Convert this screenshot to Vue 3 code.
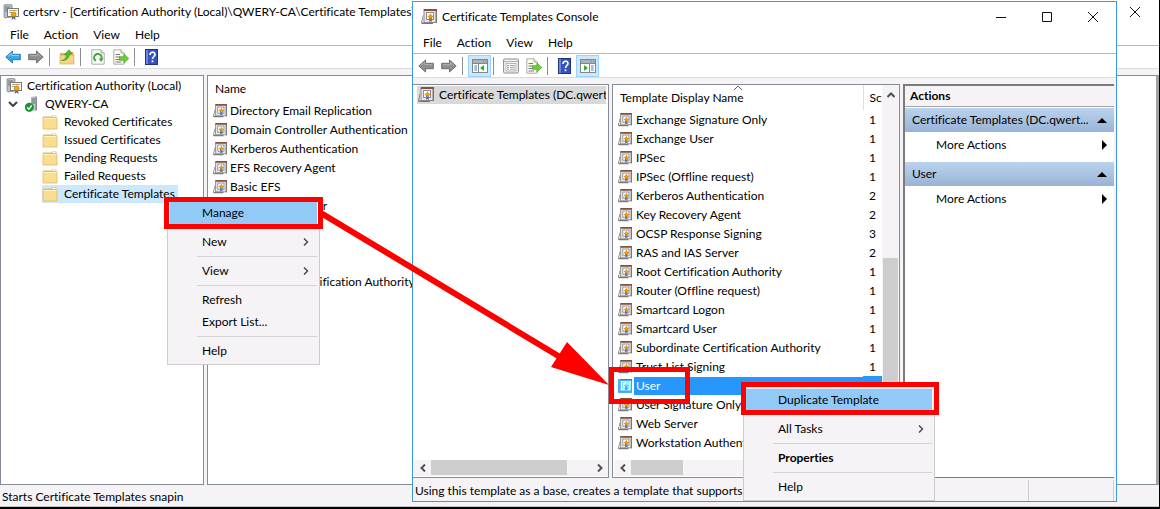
<template>
    <div class="desktop">
        <svg class="sprite" aria-hidden="true">
            <symbol id="template" viewBox="0 0 16 16">
                <path d="M2.5 7 L1 13.5 H12 V15 H1 L0 14 L2 6z" fill="#77777c" />
                <path d="M2.8 8 L2 13 H12z" fill="#fff" />
                <rect x="3" y="0.5" width="12.5" height="13" fill="#ece7e4" stroke="#8d8583" />
                <rect x="3" y="0" width="13" height="2" fill="#87503f" />
                <rect x="14.5" y="2" width="1.5" height="12" fill="#77777c" />
                <rect x="5.5" y="3.5" width="7" height="7" fill="#fff" stroke="#8b8b99" />
                <path d="M8.2 8 H10.8 V13 L9.5 12 L8.2 13z" fill="#4d71b5" />
                <path d="M9.5 4.8 L10.4 6.6 L12.2 7.5 L10.4 8.4 L9.5 10.2 L8.6 8.4 L6.8 7.5 L8.6 6.6z" fill="#f0a500" stroke="#c77d00" stroke-width="0.6" />
            </symbol>
            <symbol id="authority" viewBox="0 0 16 16">
                <path d="M1 1 L7 0 L9 1 V13 L2 14 L1 13z" fill="#b9c0c6" stroke="#737c84" stroke-width="0.7" />
                <path d="M2 3 H7 M2 5 H7 M2 7 H7" stroke="#5b656e" stroke-width="0.8" />
                <rect x="4.5" y="4.5" width="11" height="8" fill="#fffdf4" stroke="#80786a" />
                <path d="M6 6.5 H14 M6 8.5 H9" stroke="#a7a196" />
                <path d="M9.5 11 L8.5 16 L10.5 14.5 L12.5 16 L12 11z" fill="#3f6fc0" />
                <circle cx="10.7" cy="10.3" r="2.4" fill="#f2a30d" stroke="#c47800" stroke-width="0.7" />
            </symbol>
            <symbol id="server" viewBox="0 0 16 16">
                <path d="M6 1 L10 0 L12 1 V14 L10 15 L6 14z" fill="#c4cad0" />
                <path d="M10.4 0.5 L12 1 V14 L10.4 15z" fill="#808990" />
                <path d="M6.5 3 H10 M6.5 5 H10 M6.5 7 H10" stroke="#59636d" />
                <circle cx="4.3" cy="11.3" r="4.2" fill="#169a32" stroke="#0d7a23" stroke-width="0.6" />
                <path d="M2.2 11.4 L4 13.2 L6.7 9.4" fill="none" stroke="#fff" stroke-width="1.4" />
            </symbol>
            <symbol id="folder" viewBox="0 0 16 16">
                <path d="M1 2.5 H9 L10 1.5 H14.5 V14.5 H1z" fill="#e6be5f" />
                <path d="M10.5 2.5 H13.5" stroke="#fff" />
                <rect x="1" y="4" width="14" height="11" fill="#f9dd91" stroke="#e3bb5e" stroke-width="0.8" />
                <path d="M1.5 4.5 H14.5" stroke="#fff1c4" />
            </symbol>
            <symbol id="back" viewBox="0 0 16 16">
                <path d="M0.8 8 L7.5 2 V5.3 H15.3 V10.7 H7.5 V14z" fill="#35a7e8" stroke="#1f74ae" stroke-width="0.9" />
                <path d="M3 7.4 L6.8 4.2 V6.6 H14" fill="none" stroke="#8fd5fa" />
            </symbol>
            <symbol id="back-off" viewBox="0 0 16 16">
                <path d="M0.8 8 L7.5 2 V5.3 H15.3 V10.7 H7.5 V14z" fill="#8f8f8f" stroke="#666" stroke-width="0.9" />
                <path d="M3 7.4 L6.8 4.2 V6.6 H14" fill="none" stroke="#b0b0b0" />
            </symbol>
            <symbol id="forward-off" viewBox="0 0 16 16">
                <path d="M15.2 8 L8.5 2 V5.3 H0.7 V10.7 H8.5 V14z" fill="#8f8f8f" stroke="#666" stroke-width="0.9" />
                <path d="M2 6.6 H9.3 V4.4 L13 7.4" fill="none" stroke="#b0b0b0" />
            </symbol>
            <symbol id="up" viewBox="0 0 16 16">
                <path d="M1 4 H9 L10 3 H14.5 V15 H1z" fill="#dfb24e" />
                <rect x="1" y="6" width="14" height="9" fill="#f5d587" stroke="#cfa344" stroke-width="0.6" />
                <path d="M2.5 11.5 C6 11 7.4 8.5 7.6 5.4 L5.4 5.6 L10 0.8 L13 4.6 L10.4 4.8 C10.2 9 7.5 12 2.5 11.5z" fill="#52c02b" stroke="#2e8a12" stroke-width="0.6" />
            </symbol>
            <symbol id="refresh" viewBox="0 0 16 16">
                <path d="M1.8 0.8 H11 L14.2 4 V15.2 H1.8z" fill="#fbfbfb" stroke="#999" stroke-width="0.8" />
                <path d="M11 0.8 V4 H14.2" fill="#ddd" stroke="#999" stroke-width="0.7" />
                <path d="M6 11.8 A3.7 3.7 0 1 1 11.3 10" fill="none" stroke="#35a52c" stroke-width="1.8" />
                <path d="M8.8 9.6 H13.4 L11 13z" fill="#35a52c" />
            </symbol>
            <symbol id="export" viewBox="0 0 16 16">
                <path d="M0.8 0.8 H8 L11.2 4 V15.2 H0.8z" fill="#fffbe6" stroke="#999" stroke-width="0.8" />
                <path d="M8 0.8 V4 H11.2" fill="#e8e4cc" stroke="#999" stroke-width="0.7" />
                <path d="M2.5 5.5 H7 M2.5 8 H7 M2.5 10.5 H7 M2.5 13 H8" stroke="#77778c" />
                <path d="M6.5 7.7 H11 V5 L15.8 9.5 L11 14 V11.3 H6.5z" fill="#6bd03a" stroke="#3d991d" stroke-width="0.6" />
            </symbol>
            <symbol id="help" viewBox="0 0 16 16">
                <rect x="1.5" y="0.5" width="12" height="15" fill="#3553bd" stroke="#20337e" />
                <rect x="2" y="1" width="2" height="14" fill="#6d87de" />
                <path d="M6 6 C6 2.2 11.2 2.4 11 5.6 C10.9 7.5 8.5 7.6 8.5 10" fill="none" stroke="#fff" stroke-width="1.6" />
                <rect x="7.6" y="11.4" width="1.8" height="1.8" fill="#fff" />
            </symbol>
            <symbol id="props" viewBox="0 0 16 16">
                <rect x="0.6" y="1" width="14.8" height="14" rx="1" fill="#f3f3f3" stroke="#8b8b8b" />
                <path d="M1 3.5 H15" stroke="#b0b0b0" />
                <rect x="3" y="5.5" width="10" height="7.5" fill="#fff" stroke="#a5a5a5" stroke-width="0.8" />
                <path d="M4.3 7.5 H5.8 M4.3 9.3 H5.8 M4.3 11.2 H5.8" stroke="#3c8bcf" />
                <path d="M7 7.5 H12 M7 9.3 H12 M7 11.2 H12" stroke="#8f8f8f" stroke-width="0.8" />
            </symbol>
            <symbol id="tree-pane" viewBox="0 0 16 16">
                <rect x="0.5" y="1.5" width="15" height="13" fill="#fff" stroke="#7e868e" />
                <path d="M1 2 H15 V5.5 H1z" fill="#aab2b9" />
                <path d="M1 5.5 H15 M6.5 6 V14 M11 3.5 h1 M13 3.5 h1" stroke="#7e868e" />
                <path d="M2.3 8 H5 M2.3 10 H5 M2.3 12 H5" stroke="#3c7fc0" />
                <path d="M12 7 V13 L8 10z" fill="#30b01e" />
            </symbol>
            <symbol id="action-pane" viewBox="0 0 16 16">
                <rect x="0.5" y="1.5" width="15" height="13" fill="#fff" stroke="#7e868e" />
                <path d="M1 2 H15 V5.5 H1z" fill="#aab2b9" />
                <path d="M1 5.5 H15 M9.5 6 V14 M11 3.5 h1 M13 3.5 h1" stroke="#7e868e" />
                <path d="M11 8 H13.7 M11 10 H13.7 M11 12 H13.7" stroke="#3c7fc0" />
                <path d="M4 7 V13 L8 10z" fill="#30b01e" />
            </symbol>
        </svg>

        <section class="window main">
            <header class="titlebar">
                <svg class="icon"><use href="#authority" /></svg>
                <h1>certsrv - [Certification Authority (Local)\QWERY-CA\Certificate Templates]</h1>
                <button class="control" aria-label="Close">
                    <svg viewBox="0 0 12 12"><path d="M1 1 L11 11 M11 1 L1 11" /></svg>
                </button>
            </header>
            <nav class="menubar">
                <button v-for="m in menus" :key="m">{{ m }}</button>
            </nav>
            <div class="toolbar">
                <template v-for="(t, i) in mainTools" :key="i">
                    <i v-if="t === '|'" class="sep"></i>
                    <button v-else :aria-label="t"><svg class="icon"><use :href="'#' + t" /></svg></button>
                </template>
            </div>
            <div class="panes">
                <div class="pane tree">
                    <div class="node"><svg class="icon"><use href="#authority" /></svg>Certification Authority (Local)</div>
                    <div class="node ca">
                        <svg class="chevron" viewBox="0 0 10 6"><path d="M1 1 L5 5 L9 1" /></svg>
                        <svg class="icon"><use href="#server" /></svg>QWERY-CA
                    </div>
                    <div v-for="f in folders" :key="f" class="node leaf" :class="{ selected: f === selectedFolder }">
                        <svg class="icon"><use href="#folder" /></svg>{{ f }}
                    </div>
                </div>
                <div class="pane list">
                    <table class="templates">
                        <thead>
                            <tr><th>Name</th></tr>
                        </thead>
                        <tbody>
                            <tr v-for="n in issued" :key="n">
                                <td><span class="cell"><svg class="icon"><use href="#template" /></svg>{{ n }}</span></td>
                            </tr>
                        </tbody>
                    </table>
                </div>
            </div>
            <footer class="status">Starts Certificate Templates snapin</footer>
        </section>

        <section class="window dialog">
            <header class="titlebar">
                <svg class="icon"><use href="#template" /></svg>
                <h1>Certificate Templates Console</h1>
                <button class="control" aria-label="Minimize">
                    <svg viewBox="0 0 12 12"><path d="M1 6.5 H11" /></svg>
                </button>
                <button class="control" aria-label="Maximize">
                    <svg viewBox="0 0 12 12"><path d="M1.5 1.5 H10.5 V10.5 H1.5z" /></svg>
                </button>
                <button class="control" aria-label="Close">
                    <svg viewBox="0 0 12 12"><path d="M1 1 L11 11 M11 1 L1 11" /></svg>
                </button>
            </header>
            <nav class="menubar">
                <button v-for="m in menus" :key="m">{{ m }}</button>
            </nav>
            <div class="toolbar">
                <template v-for="(t, i) in dialogTools" :key="i">
                    <i v-if="t === '|'" class="sep"></i>
                    <button v-else :class="{ on: t.endsWith('-pane') }" :aria-label="t"><svg class="icon"><use :href="'#' + t" /></svg></button>
                </template>
            </div>
            <div class="panes">
                <div class="pane root">
                    <div class="node"><svg class="icon"><use href="#template" /></svg>Certificate Templates (DC.qwerty</div>
                    <div class="hscroll">
                        <button aria-label="Scroll left"><svg viewBox="0 0 6 8"><path d="M5 0.5 L1.5 4 L5 7.5" /></svg></button>
                        <div class="track"><div class="thumb wide"></div></div>
                        <button aria-label="Scroll right"><svg viewBox="0 0 6 8"><path d="M1 0.5 L4.5 4 L1 7.5" /></svg></button>
                    </div>
                </div>
                <div class="pane grid">
                    <div class="gridmain">
                        <table class="templates scored">
                            <thead>
                                <tr>
                                    <th>Template Display Name<svg class="caret" viewBox="0 0 10 6"><path d="M1 5 L5 1 L9 5" /></svg></th>
                                    <th class="score">Sc</th>
                                </tr>
                            </thead>
                            <tbody>
                                <tr v-for="[n, s] in templates" :key="n" :class="{ selected: n === 'User' }">
                                    <td><span class="cell"><svg class="icon"><use href="#template" /></svg><span class="name">{{ n }}</span></span></td>
                                    <td class="score">{{ s }}</td>
                                </tr>
                            </tbody>
                        </table>
                        <div class="hscroll">
                            <button aria-label="Scroll left"><svg viewBox="0 0 6 8"><path d="M5 0.5 L1.5 4 L5 7.5" /></svg></button>
                            <div class="track"><div class="thumb"></div></div>
                        </div>
                    </div>
                    <div class="vscroll">
                        <button aria-label="Scroll up"><svg viewBox="0 0 8 6"><path d="M0.5 5 L4 1.5 L7.5 5" /></svg></button>
                        <div class="track"><div class="thumb"></div></div>
                    </div>
                </div>
                <aside class="pane actions">
                    <h2>Actions</h2>
                    <template v-for="a in actions" :key="a">
                        <h3>{{ a }}<svg viewBox="0 0 10 10"><path d="M0 8 L5 3 L10 8z" /></svg></h3>
                        <button>More Actions<svg viewBox="0 0 10 10"><path d="M3 0 L8 5 L3 10z" /></svg></button>
                    </template>
                </aside>
            </div>
            <footer class="status">
                <span>Using this template as a base, creates a template that supports</span>
                <i></i>
            </footer>
        </section>

        <div v-for="(menu, k) in contextMenus" :key="k" class="context" :class="k" role="menu">
            <template v-for="(item, i) in menu" :key="i">
                <hr v-if="item === '-'">
                <button v-else role="menuitem" :class="{ hot: i === 0, strong: item.strong }">
                    {{ item.label }}
                    <svg v-if="item.sub" viewBox="0 0 6 8"><path d="M1 0.5 L4.5 4 L1 7.5" /></svg>
                </button>
            </template>
        </div>

        <div class="mark manage"></div>
        <div class="mark user"></div>
        <div class="mark duplicate"></div>
        <svg class="arrow" viewBox="0 0 290 180">
            <path d="M1 6 L245 153" stroke="#f00" stroke-width="6" />
            <path d="M289 178 L247 135 L231 160z" fill="#f00" />
        </svg>
    </div>
</template>

<script setup>
import { ref } from 'vue';

const menus = ['File', 'Action', 'View', 'Help'];
const mainTools = ['back', 'forward-off', '|', 'up', '|', 'refresh', 'export', '|', 'help'];
const dialogTools = ['back-off', 'forward-off', '|', 'tree-pane', '|', 'props', 'export', '|', 'help', 'action-pane'];

const selectedFolder = ref('Certificate Templates');
const folders = [
    'Revoked Certificates',
    'Issued Certificates',
    'Pending Requests',
    'Failed Requests',
    'Certificate Templates',
];

const issued = [
    'Directory Email Replication',
    'Domain Controller Authentication',
    'Kerberos Authentication',
    'EFS Recovery Agent',
    'Basic EFS',
    'Domain Controller',
    'Web Server',
    'Computer',
    'User',
    'Subordinate Certification Authority',
];

const templates = [
    ['Exchange Signature Only', 1],
    ['Exchange User', 1],
    ['IPSec', 1],
    ['IPSec (Offline request)', 1],
    ['Kerberos Authentication', 2],
    ['Key Recovery Agent', 2],
    ['OCSP Response Signing', 3],
    ['RAS and IAS Server', 2],
    ['Root Certification Authority', 1],
    ['Router (Offline request)', 1],
    ['Smartcard Logon', 1],
    ['Smartcard User', 1],
    ['Subordinate Certification Authority', 1],
    ['Trust List Signing', 1],
    ['User', 1],
    ['User Signature Only', 1],
    ['Web Server', 1],
    ['Workstation Authentication', 2],
];

const actions = ['Certificate Templates (DC.qwert...', 'User'];

const contextMenus = {
    folder: [
        { label: 'Manage' }, '-',
        { label: 'New', sub: true }, '-',
        { label: 'View', sub: true }, '-',
        { label: 'Refresh' },
        { label: 'Export List...' }, '-',
        { label: 'Help' },
    ],
    template: [
        { label: 'Duplicate Template' }, '-',
        { label: 'All Tasks', sub: true }, '-',
        { label: 'Properties', strong: true }, '-',
        { label: 'Help' },
    ],
};
</script>

<style>
body {
    margin: 0;
    background: #000;
}
</style>

<style scoped>
.desktop {
    position: relative;
    display: flex;
    min-height: 100vh;
    box-sizing: border-box;
    padding: 0 1px 2px 0;
    background: #000;
    color: #000;
    font: 12px/18px Lato, "Open Sans", sans-serif;
    font-variant-ligatures: none;
    overflow: hidden;
}

.sprite {
    position: absolute;
    width: 0;
    height: 0;
}

button {
    font: inherit;
    color: inherit;
    background: none;
    border: 0;
    padding: 0;
}

svg {
    flex: none;
}

.icon {
    width: 16px;
    height: 16px;
}

.window {
    display: flex;
    flex-direction: column;
    background: #f6f3f6;
    box-sizing: border-box;
    white-space: nowrap;
}

.main {
    flex: 1;
    min-width: 0;
    border-bottom: 1px solid #c8c8cc;
}

.dialog {
    position: absolute;
    top: 1px;
    right: 43px;
    bottom: 7px;
    left: 412px;
    border: 1px solid #3c99e0;
}

.titlebar {
    display: flex;
    align-items: center;
    height: 24px;
    padding-left: 3px;
    background: #fff;
}

.titlebar h1 {
    flex: 1;
    margin: 0 0 0 4px;
    font-size: 12px;
    font-weight: normal;
}

.main .control {
    width: 48px;
}

.dialog .titlebar {
    height: 30px;
    padding-left: 8px;
}

.dialog .titlebar h1 {
    margin-left: 5px;
}

.control {
    width: 46px;
    height: 20px;
}

.control svg {
    display: block;
    width: 12px;
    height: 12px;
    margin: auto;
    fill: none;
    stroke: #111;
}

.menubar {
    display: flex;
    gap: 15px;
    height: 21px;
    padding-left: 10px;
    background: #fff;
    border-bottom: 1px solid #b9b9bd;
}

.toolbar {
    display: flex;
    align-items: center;
    height: 22px;
    padding-left: 1px;
    margin-bottom: 6px;
    background: #fff;
    border-bottom: 1px solid #dcdade;
}

.dialog .toolbar {
    height: 23px;
}

.toolbar button {
    display: flex;
    justify-content: center;
    align-items: center;
    width: 23px;
    height: 22px;
    box-sizing: border-box;
}

.toolbar button.on {
    background: #cce8ff;
    border: 1px solid #99d1ff;
}

.sep {
    width: 1px;
    height: 18px;
    margin: 0 5px 0 2px;
    background: #8e8e92;
}

.panes {
    display: flex;
    flex: 1;
    gap: 3px;
    min-height: 0;
}

.pane {
    background: #fff;
    border: 1px solid #868b96;
    box-sizing: border-box;
    overflow: hidden;
}

.tree {
    flex: none;
    width: 204px;
    padding-top: 1px;
}

.list {
    flex: 1;
    border-right: 3px solid #a2a2a6;
}

.node {
    display: flex;
    align-items: center;
    gap: 5px;
    height: 18px;
    padding-left: 5px;
}

.node.ca {
    gap: 4px;
    padding-left: 7px;
}

.node.ca .icon {
    margin-left: 3px;
}

.chevron {
    width: 10px;
    height: 6px;
    fill: none;
    stroke: #404040;
    stroke-width: 2;
}

.node.leaf {
    gap: 6px;
    width: max-content;
    margin-left: 41px;
    padding: 0 3px 0 0;
}

.leaf.selected {
    background: #cce8ff;
}

.templates {
    width: 100%;
    border-collapse: collapse;
    table-layout: fixed;
}

.templates th {
    height: 25px;
    padding: 0 0 0 7px;
    box-sizing: border-box;
    font-weight: normal;
    text-align: left;
}

.templates td {
    height: 19px;
    padding: 0 0 0 5px;
}

.cell {
    display: flex;
    align-items: center;
    height: 19px;
    gap: 3px;
}

.cell .icon {
    width: 14px;
    height: 14px;
}

.root {
    display: flex;
    flex-direction: column;
    flex: none;
    width: 196px;
    border-left: 0;
    padding: 1px 2px 0 4px;
}

.root .node {
    background: #d9d9d9;
    padding-left: 1px;
    overflow: hidden;
}

.root .hscroll {
    margin: auto -2px 1px -3px;
}

.hscroll {
    display: flex;
    height: 16px;
    background: #f6f3f6;
}

.hscroll button {
    width: 17px;
}

.hscroll svg {
    width: 6px;
    height: 8px;
}

.hscroll svg,
.vscroll svg {
    display: block;
    margin: auto;
    fill: none;
    stroke: #505050;
    stroke-width: 2;
}

.track {
    flex: 1;
}

.hscroll .thumb {
    width: 52px;
    height: 15px;
    background: #cdcdcd;
}

.hscroll .thumb.wide {
    width: 136px;
}

.grid {
    display: flex;
    flex: none;
    width: 288px;
}

.gridmain {
    display: flex;
    flex-direction: column;
    flex: 1;
}

.gridmain .hscroll {
    margin: auto 0 1px 1px;
}

.scored th {
    position: relative;
}

.scored .score {
    width: 19px;
    padding: 0 0 0 6px;
    box-sizing: border-box;
}

.scored th.score {
    border-left: 1px solid #e0e0e0;
}

/* sort marker sits on the top edge of the header */
.caret {
    position: absolute;
    top: 0;
    left: 48%;
    width: 10px;
    height: 6px;
    fill: none;
    stroke: #666;
}

.scored .name {
    flex: 1;
    padding-left: 2px;
    margin-left: -2px;
}

.scored .cell {
    gap: 3px;
}

.scored .cell .icon {
    margin-right: 1px;
}

.scored .selected .name,
.scored .selected .score {
    background: #2796fd;
    color: #fff;
}

.scored .selected .icon {
    background: #2796fd;
    filter: sepia(1) hue-rotate(170deg) saturate(3);
}

.vscroll {
    display: flex;
    flex-direction: column;
    width: 17px;
    background: #f6f3f6;
}

.vscroll button {
    height: 20px;
}

.vscroll svg {
    width: 8px;
    height: 6px;
}

.vscroll .track {
    display: flex;
    align-items: center;
    flex-direction: column;
    justify-content: flex-end;
    padding-bottom: 17px;
}

.vscroll .thumb {
    width: 15px;
    height: 57%;
    background: #cdcdcd;
}

.actions {
    flex: 1;
    margin-right: 2px;
    border-width: 2px 0 1px 2px;
    border-color: #7b7b80;
}

.actions h2 {
    margin: 0 0 1px;
    padding-left: 5px;
    font-size: 12px;
    line-height: 20px;
    background: #f6f3f6;
    border-bottom: 1px solid #a5a5a8;
}

.actions h3,
.actions button {
    display: flex;
    justify-content: space-between;
    align-items: center;
    width: 100%;
    height: 24px;
    box-sizing: border-box;
    margin: 0 0 5px;
    padding: 0 7px;
}

.actions h3 {
    margin: 0;
    font-size: 12px;
    font-weight: normal;
    background: linear-gradient(#bad3ee, #9ab3d5);
}

.actions button {
    height: 25px;
    padding: 0 5px 0 31px;
}

.actions svg {
    width: 10px;
    height: 10px;
}

.status {
    display: flex;
    align-items: center;
    height: 21px;
    padding: 3px 0 0 2px;
    box-sizing: border-box;
}

.dialog .status {
    height: 23px;
    padding-top: 2px;
}

.dialog .status span {
    flex: 1;
}

.dialog .status i {
    align-self: stretch;
    width: 84px;
    margin-right: 2px;
    border: 1px solid #cfcdd1;
    border-width: 0 1px;
}

.context {
    position: absolute;
    box-sizing: border-box;
    padding: 2px;
    background: #f6f3f6;
    border: 1px solid #cccccf;
}

.context.folder {
    top: 199px;
    left: 167px;
    width: 153px;
}

.context.template {
    top: 386px;
    left: 743px;
    width: 192px;
}

.context button {
    display: flex;
    justify-content: space-between;
    align-items: center;
    width: 100%;
    height: 22px;
    padding: 0 8px 0 32px;
}

.context button.hot {
    background: #91c9f7;
}

.context button.strong {
    font-weight: bold;
}

.context svg {
    width: 6px;
    height: 8px;
    fill: none;
    stroke: #444;
    stroke-width: 1.4;
}

.context hr {
    margin: 3px 0 3px 27px;
    border: 0;
    border-top: 1px solid #d5d3d6;
}

.mark {
    position: absolute;
    box-sizing: border-box;
    border: 5px solid #f00;
}

.mark.manage {
    top: 197px;
    left: 164px;
    width: 159px;
    height: 32px;
}

.mark.user {
    top: 367px;
    left: 609px;
    width: 81px;
    height: 37px;
}

.mark.duplicate {
    top: 382px;
    left: 741px;
    width: 198px;
    height: 33px;
}

.arrow {
    position: absolute;
    top: 207px;
    left: 320px;
    width: 290px;
    height: 180px;
}
</style>
